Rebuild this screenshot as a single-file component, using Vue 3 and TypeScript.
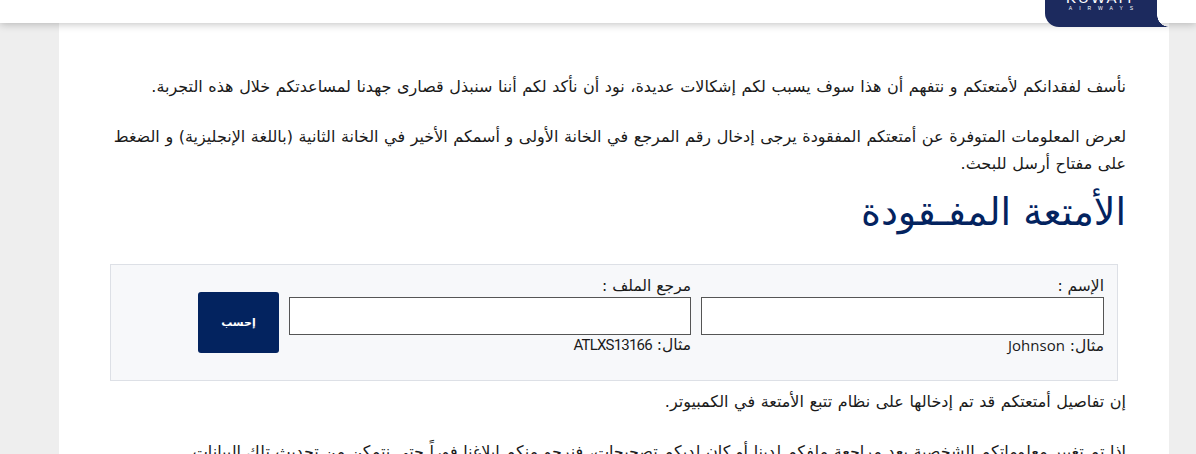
<script setup lang="ts">
const fields = [
  { label: "الإسم :", example: "Johnson" },
  { label: "مرجع الملف :", example: "ATLXS13166" },
];
</script>

<template>
  <div class="page" dir="rtl">
    <header class="topbar">
      <div class="logo-tab">
        <span class="logo-name" dir="ltr">KUWAIT</span>
        <span class="logo-sub" dir="ltr">AIRWAYS</span>
      </div>
    </header>
    <main class="card">
      <p class="para">نأسف لفقدانكم لأمتعتكم و نتفهم أن هذا سوف يسبب لكم إشكالات عديدة، نود أن نأكد لكم أننا سنبذل قصارى جهدنا لمساعدتكم خلال هذه التجربة.</p>
      <p class="para">لعرض المعلومات المتوفرة عن أمتعتكم المفقودة يرجى إدخال رقم المرجع في الخانة الأولى و أسمكم الأخير في الخانة الثانية (باللغة الإنجليزية) و الضغط على مفتاح أرسل للبحث.</p>
      <h1 class="title">الأمتعة المفـقودة</h1>
      <form class="box" @submit.prevent>
        <div v-for="f in fields" :key="f.label" class="field">
          <label class="label">{{ f.label }}</label>
          <input class="input" type="text" />
          <span class="hint">مثال: <bdi class="example">{{ f.example }}</bdi></span>
        </div>
        <button class="calc" type="submit">إحسب</button>
      </form>
      <p class="para after">إن تفاصيل أمتعتكم قد تم إدخالها على نظام تتبع الأمتعة في الكمبيوتر.</p>
      <p class="para">إذا تم تغيير معلوماتكم الشخصية بعد مراجعة ملفكم لدينا أو كان لديكم تصحيحات، فنرجو منكم ابلاغنا فوراً حتى نتمكن من تحديث تلك البيانات</p>
    </main>
  </div>
</template>

<style>
html,
body {
  margin: 0;
  height: 454px;
  overflow: hidden;
}
</style>

<style scoped>
.page {
  height: 454px;
  overflow: hidden;
  background: #eeeeee;
  font-family: "DejaVu Sans", "Noto Sans", sans-serif;
  color: #1a1a1a;
}

.topbar {
  position: relative;
  z-index: 2;
  height: 23px;
  background: #fff;
  box-shadow: 0 1px 8px rgba(0, 0, 0, 0.25);
}

.logo-tab {
  position: absolute;
  top: -14px;
  right: 39px;
  width: 112px;
  height: 41px;
  box-sizing: border-box;
  background: #1c2a5e;
  border-radius: 0 0 0 14px;
  color: #fff;
  display: flex;
  flex-direction: column;
  align-items: center;
  padding-top: 5px;
}

/* concave corner on the right of the tab */
.logo-tab::after {
  content: "";
  position: absolute;
  top: 29px;
  right: -12px;
  width: 12px;
  height: 12px;
  background: #1c2a5e;
  -webkit-mask: radial-gradient(circle at 100% 0, transparent 11.5px, #000 12px);
  mask: radial-gradient(circle at 100% 0, transparent 11.5px, #000 12px);
}

.logo-name {
  font-family: "Liberation Sans", sans-serif;
  font-size: 15px;
  line-height: 14px;
  letter-spacing: 2px;
}

.logo-sub {
  font-family: "Liberation Sans", sans-serif;
  font-size: 5px;
  line-height: 7px;
  letter-spacing: 7px;
  margin-right: -7px;
}

.card {
  margin: 0 27px 0 59px;
  background: #fff;
  padding: 50px 43px 0 43px;
  height: 400px;
}

.para {
  margin: 0 0 23px;
  font-size: 16px;
  word-spacing: 0.5px;
  line-height: 27px;
}

.title {
  margin: -10px 0 30px;
  font-size: 38px;
  line-height: 44px;
  font-weight: 400;
  color: #03235f;
}

.box {
  display: flex;
  align-items: center;
  gap: 10px;
  box-sizing: border-box;
  width: 1008px;
  height: 117px;
  margin-right: 8px;
  padding: 0 13px;
  background: #f7f8fa;
  border: 1px solid #dde0e6;
}

.field {
  width: 402px;
  display: flex;
  flex-direction: column;
  padding-bottom: 14px;
  font-size: 15.5px;
}

.field:first-child {
  width: 403px;
}

.label {
  line-height: 22px;
}

.input {
  box-sizing: border-box;
  height: 38px;
  border: 1px solid #555;
  background: #fff;
  padding: 0;
}

.hint {
  line-height: 21px;
}

.example {
  font-family: "Open Sans", sans-serif;
  font-size: 15px;
}

.field:nth-child(2) .example {
  font-family: "Roboto", sans-serif;
  letter-spacing: -0.8px;
}

.calc {
  width: 81px;
  height: 61px;
  border: 0;
  border-radius: 3px;
  background: #03235f;
  color: #fff;
  font-family: inherit;
  font-size: 11px;
  font-weight: 700;
}

.after {
  margin-top: 7px;
}
</style>
